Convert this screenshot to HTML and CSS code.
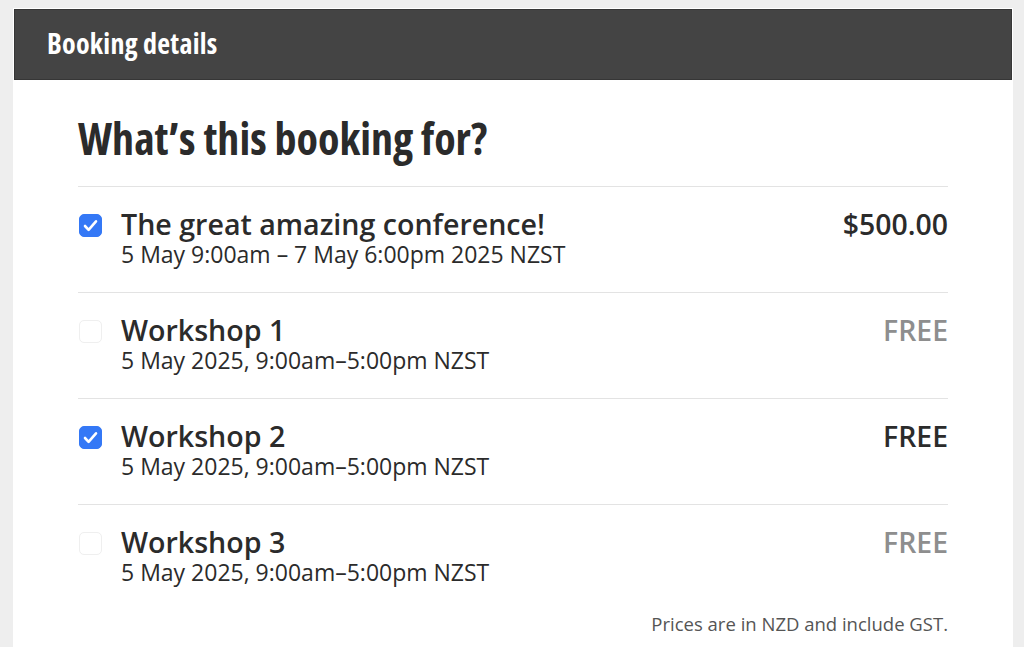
FILE: index.html
```html
<!DOCTYPE html>
<html lang="en">
<head>
<meta charset="utf-8">
<title>Booking details</title>
<link rel="stylesheet" href="styles.css">
</head>
<body>
<div class="card">
  <div class="card-header">Booking details</div>
  <div class="card-body">
    <h1 class="heading">What’s this booking for?</h1>
    <ul class="items">
      <li class="item">
        <span class="check checked"><svg viewBox="0 0 23 23" width="23" height="23"><path d="M6 12l3.6 3.8L17 7.3" fill="none" stroke="#fff" stroke-width="2.6" stroke-linecap="round" stroke-linejoin="round"/></svg></span>
        <div class="info">
          <div class="title">The great amazing conference!</div>
          <div class="date">5 May 9:00am – 7 May 6:00pm 2025 NZST</div>
        </div>
        <div class="price">$500.00</div>
      </li>
      <li class="item">
        <span class="check"></span>
        <div class="info">
          <div class="title">Workshop 1</div>
          <div class="date">5 May 2025, 9:00am–5:00pm NZST</div>
        </div>
        <div class="price muted">FREE</div>
      </li>
      <li class="item">
        <span class="check checked"><svg viewBox="0 0 23 23" width="23" height="23"><path d="M6 12l3.6 3.8L17 7.3" fill="none" stroke="#fff" stroke-width="2.6" stroke-linecap="round" stroke-linejoin="round"/></svg></span>
        <div class="info">
          <div class="title">Workshop 2</div>
          <div class="date">5 May 2025, 9:00am–5:00pm NZST</div>
        </div>
        <div class="price">FREE</div>
      </li>
      <li class="item">
        <span class="check"></span>
        <div class="info">
          <div class="title">Workshop 3</div>
          <div class="date">5 May 2025, 9:00am–5:00pm NZST</div>
        </div>
        <div class="price muted">FREE</div>
      </li>
    </ul>
    <p class="note">Prices are in NZD and include GST.</p>
  </div>
</div>
</body>
</html>
```
FILE: styles.css
```css
html, body {
  margin: 0;
  padding: 0;
}
body {
  background: #eeeeee;
  padding: 8px 11px 0 13px;
  font-family: "Open Sans", "Noto Sans", sans-serif;
  color: #2b2b2b;
  overflow: hidden;
  height: 647px;
  box-sizing: border-box;
}
.card {
  background: #fff;
  border: 1px solid #fff;
  height: 100%;
}
.card-header {
  background: #444444;
  border: 1px solid #363636;
  height: 69px;
  line-height: 67px;
  padding-left: 32px;
  color: #fff;
  font-size: 28px;
  font-weight: 700;
  font-stretch: 75%;
  letter-spacing: 0.25px;
}
.card-body {
  padding: 0 64px;
}
.heading {
  margin: 0;
  padding: 32px 0 22px;
  font-size: 44px;
  line-height: 52px;
  font-weight: 700;
  font-stretch: 75%;
  color: #2b2b2b;
}
.items {
  list-style: none;
  margin: 0;
  padding: 0;
}
.item {
  display: flex;
  align-items: flex-start;
  border-top: 1px solid #e3e3e3;
  height: 85px;
  padding-top: 20px;
}
.check {
  flex: none;
  width: 23px;
  height: 23px;
  margin: 7px 19px 0 1px;
  border-radius: 5px;
  border: 1px solid #efefef;
  box-sizing: border-box;
  background: #fff;
  display: flex;
}
.check.checked {
  background: #3478f6;
  border-color: #3478f6;
}
.check svg {
  margin: -1px;
  flex: none;
}
.info {
  flex: 1;
}
.title {
  font-size: 28.6px;
  line-height: 34px;
  font-weight: 600;
  color: #2b2b2b;
}
.date {
  font-size: 23px;
  line-height: 27px;
  color: #2b2b2b;
}
.price {
  font-size: 28.4px;
  line-height: 34px;
  font-weight: 600;
  color: #2b2b2b;
}
.price.muted {
  color: #8e8e8e;
}
.note {
  margin: 2px 0 0;
  text-align: right;
  font-size: 18.5px;
  line-height: 24px;
  color: #555;
}
```
